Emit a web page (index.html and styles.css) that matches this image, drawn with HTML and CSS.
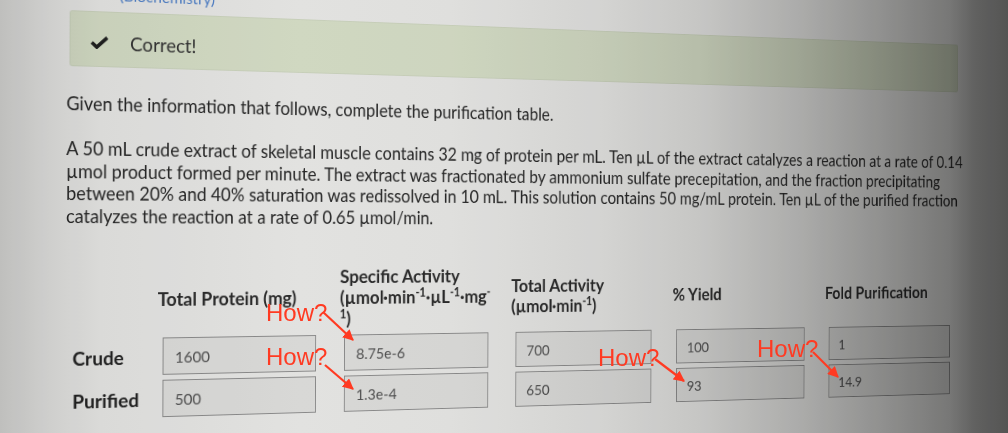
FILE: index.html
```html
<!DOCTYPE html>
<html lang="en">
<head>
<meta charset="utf-8">
<title>Purification table</title>
<link rel="stylesheet" href="styles.css">
</head>
<body>
<div class="page">
  <div class="crumb">(Biochemistry)</div>
  <div class="alert">
    <svg class="check" viewBox="0 0 20 14" width="19" height="13"><polyline points="1.5,7 7,12 18.5,1.5" fill="none" stroke="#1f1f1f" stroke-width="3.8"/></svg>
    <span>Correct!</span>
  </div>
  <p class="lead">Given the information that follows, complete the purification table.</p>
  <p class="problem">A 50 mL crude extract of skeletal muscle contains 32 mg of protein per mL. Ten µL of the extract catalyzes a reaction at a rate of 0.14<br>µmol product formed per minute. The extract was fractionated by ammonium sulfate precepitation, and the fraction precipitating<br>between 20% and 40% saturation was redissolved in 10 mL. This solution contains 50 mg/mL protein. Ten µL of the purified fraction<br>catalyzes the reaction at a rate of 0.65 µmol/min.</p>
  <div class="ptable">
    <div class="corner"></div>
    <div class="th">Total Protein (mg)</div>
    <div class="th">Specific Activity<br>(µmol·min<sup>-1</sup>·µL<sup>-1</sup>·mg<sup>-</sup><br><sup>1</sup>)</div>
    <div class="th">Total Activity<br>(µmol·min<sup>-1</sup>)</div>
    <div class="th">% Yield</div>
    <div class="th">Fold Purification</div>

    <div class="rl">Crude</div>
    <div class="inp">1600</div>
    <div class="inp">8.75e-6</div>
    <div class="inp">700</div>
    <div class="inp">100</div>
    <div class="inp">1</div>

    <div class="rl">Purified</div>
    <div class="inp">500</div>
    <div class="inp">1.3e-4</div>
    <div class="inp">650</div>
    <div class="inp">93</div>
    <div class="inp">14.9</div>
  </div>
</div>
<div class="vignette"></div>
<svg class="marks" width="1008" height="433" viewBox="0 0 1008 433">
  <defs>
    <marker id="ah" viewBox="0 0 10 10" refX="9" refY="5" markerWidth="5" markerHeight="5" orient="auto" markerUnits="strokeWidth">
      <path d="M0,0 L10,5 L0,10 z" fill="#ff3a22"/>
    </marker>
  </defs>
  <g stroke="#ff3a22" stroke-width="2.2" fill="none" marker-end="url(#ah)">
    <line x1="323" y1="312" x2="353" y2="340"/>
    <line x1="325" y1="365" x2="353" y2="389"/>
    <line x1="655" y1="359" x2="684" y2="381"/>
    <line x1="813" y1="352" x2="838" y2="377"/>
  </g>
</svg>
<span class="how how-a">How?</span>
<span class="how how-b">How?</span>
<span class="how how-c">How?</span>
<span class="how how-d">How?</span>
</body>
</html>
```

FILE: styles.css
```css
html, body {
  margin: 0;
  padding: 0;
}
body {
  width: 1008px;
  height: 433px;
  overflow: hidden;
  position: relative;
  background: #e4e4e2;
  font-family: Lato, "Noto Sans", sans-serif;
  color: #262626;
}
.page {
  width: 1240px;
  padding-left: 66px;
  box-sizing: border-box;
  transform-origin: 66px 240px;
  transform: rotate(0.2deg) perspective(1000px) rotateY(9.44deg);
}
.crumb {
  margin: -17px 0 0 54px;
  height: 20px;
  line-height: 20px;
  font-size: 16px;
  color: #4d7dc4;
}
.alert {
  margin: 7px 0 0 3px;
  width: 1058px;
  height: 56px;
  box-sizing: border-box;
  padding: 6px 0 0 20px;
  display: flex;
  align-items: center;
  gap: 22px;
  background: #d2dac3;
  border: 1px solid rgba(0, 0, 0, 0.04);
  border-radius: 3px;
  font-size: 19.5px;
  color: #333;
}
.check {
  display: block;
}
.lead {
  margin: 25.8px 0 0;
  font-size: 18.4px;
  line-height: 22px;
}
.problem {
  margin: 23.6px 0 0;
  font-size: 18.4px;
  line-height: 22.4px;
  white-space: nowrap;
}
.ptable {
  margin-top: 39.6px;
  display: grid;
  grid-template-columns: 94.7px repeat(5, 196.5px);
  grid-template-rows: 67.5px 38px 38px;
  row-gap: 5px;
}
.th {
  align-self: center;
  font-weight: 700;
  font-size: 19px;
  line-height: 22px;
  white-space: nowrap;
  color: #2a2a2a;
}
.th sup {
  font-size: 0.65em;
  line-height: 0;
  vertical-align: 0.55em;
}
.rl {
  align-self: center;
  padding-left: 7px;
  font-weight: 700;
  font-size: 19.5px;
  color: #222;
}
.inp {
  margin-left: 5.3px;
  width: 165px;
  height: 38px;
  box-sizing: border-box;
  border: 1px solid #8a8a8a;
  background: #dadad8;
  padding-left: 12px;
  display: flex;
  align-items: center;
  font-size: 16px;
  color: #505050;
}
.vignette {
  position: fixed;
  left: 0;
  top: 0;
  width: 1008px;
  height: 433px;
  pointer-events: none;
  mix-blend-mode: multiply;
  z-index: 2;
  background: linear-gradient(to right, #d6d6d6 0, #e8e8e8 50px, #f4f4f4 100px, #fdfdfd 300px, #fafafa 450px, #ededed 600px, #dedede 700px, #c0c0c0 800px, #a2a2a2 880px, #858585 950px, #6c6c6c 975px, #5e5e5e 1008px);
}
.marks {
  position: absolute;
  left: 0;
  top: 0;
  z-index: 3;
  pointer-events: none;
}
.how {
  position: absolute;
  z-index: 4;
  font-family: "Liberation Sans", Arial, sans-serif;
  font-size: 24px;
  line-height: 24px;
  color: #ff3a22;
}
.how-a { left: 266px; top: 301px; }
.how-b { left: 266px; top: 345px; }
.how-c { left: 598px; top: 346px; }
.how-d { left: 757px; top: 337px; }
```
